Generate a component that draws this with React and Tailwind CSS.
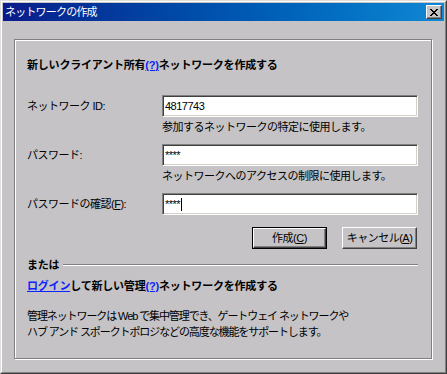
import React from "react";

const font = "font-['Liberation_Sans','Noto_Sans_CJK_JP',sans-serif]";

function Field({ children, caret }) {
  return (
    <div className="w-[256px] h-[22px] bg-white border border-t-[#808080] border-l-[#808080] border-r-white border-b-white shadow-[inset_1px_1px_0_#404040,inset_-1px_-1px_0_#d4d0c8] flex items-center pl-[2px] text-[11px] leading-none text-black">
      <span>{children}</span>
      {caret && <span className="inline-block w-px h-[13px] bg-black ml-px" />}
    </div>
  );
}

function Btn({ children, def }) {
  const inner = (
    <div className="w-full h-full border border-t-white border-l-white border-r-[#404040] border-b-[#404040] shadow-[inset_-1px_-1px_0_#808080] flex items-center justify-center text-[11px] tracking-[-0.5px] text-black">
      {children}
    </div>
  );
  return def ? (
    <div className="w-[75px] h-[22px] border border-black">{inner}</div>
  ) : (
    <div className="w-[75px] h-[22px]">{inner}</div>
  );
}

export default function App() {
  return (
    <div className={`${font} w-[447px] h-[374px] bg-[#c5c3c6] border border-t-[#dfdfdf] border-l-[#dfdfdf] border-r-[#404040] border-b-[#404040]`}>
      <div className="h-full border border-t-white border-l-white border-r-[#808080] border-b-[#808080] p-px">
        <div className="h-[18px] flex items-center justify-between pl-[2px] pr-[2px] bg-gradient-to-r from-[#0a1a8a] to-[#1088d4]">
          <span className="text-white text-[11px] tracking-[-0.8px] leading-none">ネットワークの作成</span>
          <div className="w-[16px] h-[14px] bg-[#c5c3c6] border border-t-white border-l-white border-r-[#404040] border-b-[#404040] shadow-[inset_-1px_-1px_0_#808080] flex items-center justify-center">
            <svg width="8" height="7" viewBox="0 0 8 7" shapeRendering="crispEdges">
              <path d="M0 0h2v1h-2zM6 0h2v1h-2zM1 1h2v1h-2zM5 1h2v1h-2zM2 2h4v1h-4zM3 3h2v1h-2zM2 4h4v1h-4zM1 5h2v1h-2zM5 5h2v1h-2zM0 6h2v1h-2zM6 6h2v1h-2z" fill="#000" />
            </svg>
          </div>
        </div>

        <div className="mt-[18px] ml-[11px] w-[418px] h-[320px] border border-[#808080] shadow-[1px_1px_0_#fff,inset_1px_1px_0_#fff] pl-[12px] pr-[13px] text-[11px] tracking-[-0.5px] text-black">
          <div className="mt-[17px] h-[16px] leading-[16px] font-bold tracking-[-0.2px]">
            新しいクライアント所有<span className="text-[#0b24fb] underline">(?)</span>ネットワークを作成する
          </div>

          <div className="mt-[22px] flex items-center">
            <div className="w-[135px]">ネットワーク ID:</div>
            <Field>4817743</Field>
          </div>
          <div className="ml-[135px] mt-[2px] h-[16px] leading-[16px]">参加するネットワークの特定に使用します。</div>

          <div className="mt-[9px] flex items-center">
            <div className="w-[135px]">パスワード:</div>
            <Field>****</Field>
          </div>
          <div className="ml-[135px] mt-[2px] h-[16px] leading-[16px]">ネットワークへのアクセスの制限に使用します。</div>

          <div className="mt-[9px] flex items-center">
            <div className="w-[135px]">
              パスワードの確認(<span className="underline">F</span>):
            </div>
            <Field caret>****</Field>
          </div>

          <div className="mt-[12px] flex justify-end gap-[15px] pr-px">
            <Btn def>
              作成(<span className="underline">C</span>)
            </Btn>
            <Btn>
              キャンセル(<span className="underline">A</span>)
            </Btn>
          </div>

          <div className="mt-[8px] h-[16px] flex items-center">
            <span className="font-bold leading-[16px] tracking-[-0.2px]">または</span>
            <div className="flex-1 ml-[4px] h-[2px] border-t border-t-[#808080] border-b border-b-white" />
          </div>

          <div className="mt-[5px] h-[16px] leading-[16px] font-bold tracking-[-0.2px]">
            <span className="text-[#0b24fb] underline">ログイン</span>して新しい管理<span className="text-[#0b24fb] underline">(?)</span>ネットワークを作成する
          </div>

          <div className="mt-[14px] leading-[16px] tracking-[-1.1px]">
            <div>管理ネットワークは Web で集中管理でき、ゲートウェイ ネットワークや</div>
            <div>ハブ アンド スポークトポロジなどの高度な機能をサポートします。</div>
          </div>
        </div>
      </div>
    </div>
  );
}
